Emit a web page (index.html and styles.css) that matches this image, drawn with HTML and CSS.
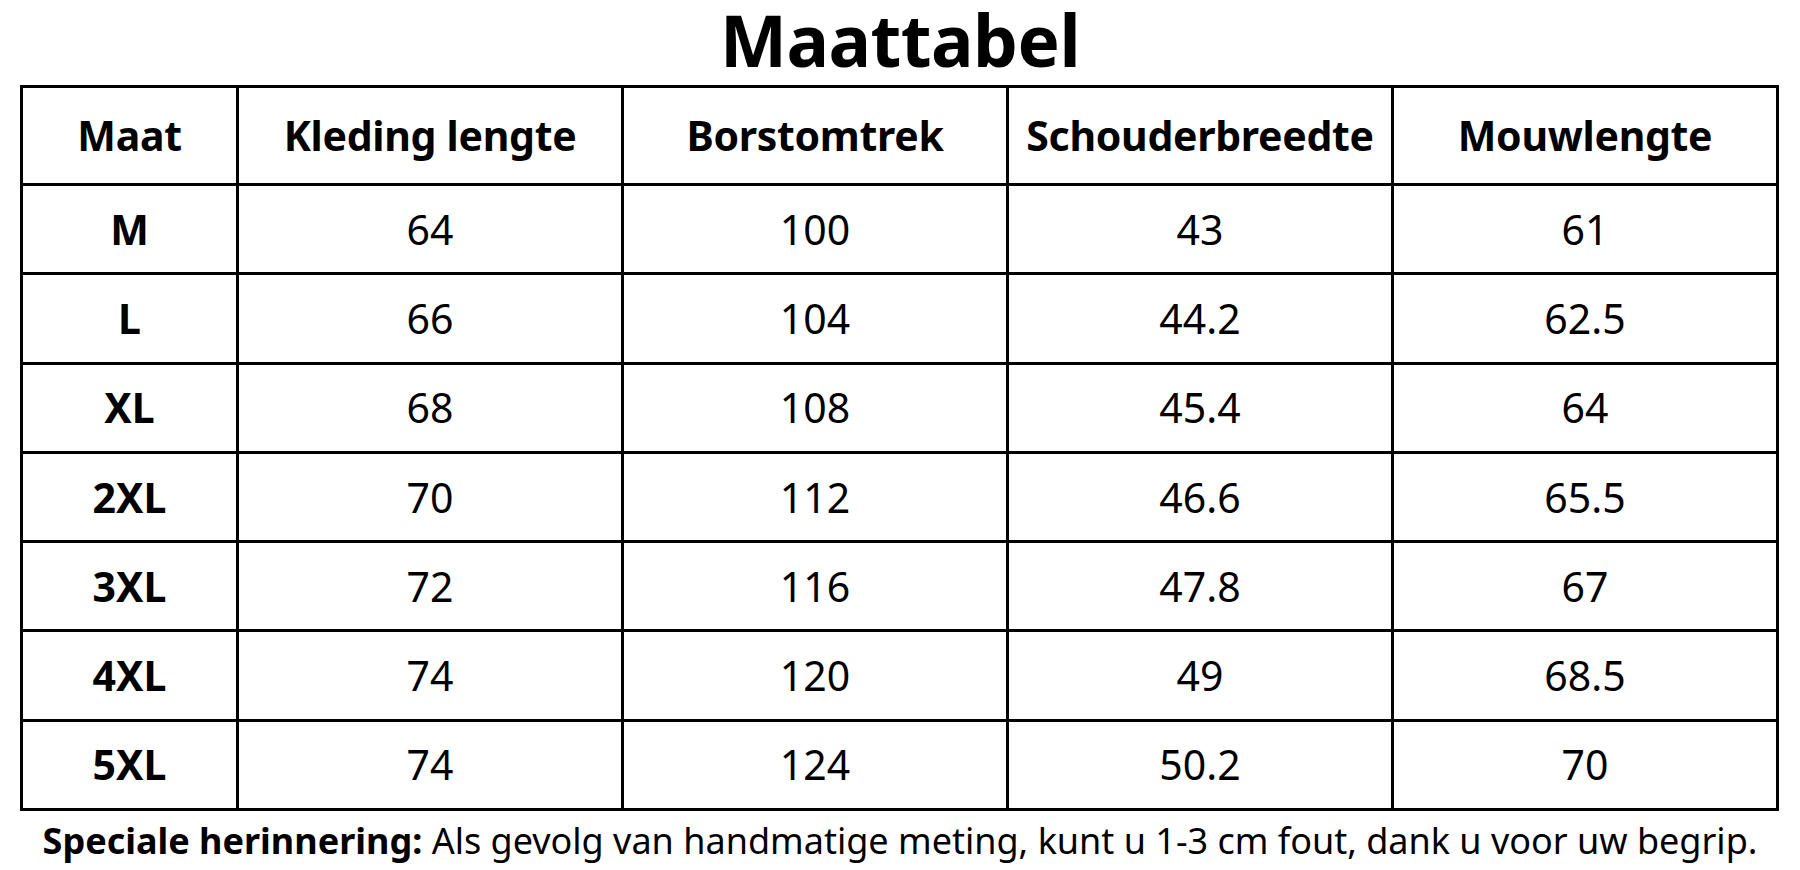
FILE: index.html
```html
<!DOCTYPE html>
<html lang="nl">
<head>
<meta charset="utf-8">
<title>Maattabel</title>
<link rel="stylesheet" href="styles.css">
</head>
<body>
<main class="page">
  <h1 class="title">Maattabel</h1>
  <div class="grid">
    <div class="cell head">Maat</div>
    <div class="cell head">Kleding lengte</div>
    <div class="cell head">Borstomtrek</div>
    <div class="cell head">Schouderbreedte</div>
    <div class="cell head">Mouwlengte</div>

    <div class="cell size">M</div><div class="cell">64</div><div class="cell">100</div><div class="cell">43</div><div class="cell">61</div>
    <div class="cell size">L</div><div class="cell">66</div><div class="cell">104</div><div class="cell">44.2</div><div class="cell">62.5</div>
    <div class="cell size">XL</div><div class="cell">68</div><div class="cell">108</div><div class="cell">45.4</div><div class="cell">64</div>
    <div class="cell size">2XL</div><div class="cell">70</div><div class="cell">112</div><div class="cell">46.6</div><div class="cell">65.5</div>
    <div class="cell size">3XL</div><div class="cell">72</div><div class="cell">116</div><div class="cell">47.8</div><div class="cell">67</div>
    <div class="cell size">4XL</div><div class="cell">74</div><div class="cell">120</div><div class="cell">49</div><div class="cell">68.5</div>
    <div class="cell size">5XL</div><div class="cell">74</div><div class="cell">124</div><div class="cell">50.2</div><div class="cell">70</div>
  </div>
  <p class="note"><strong>Speciale herinnering:</strong> Als gevolg van handmatige meting, kunt u 1-3 cm fout, dank u voor uw begrip.</p>
</main>
</body>
</html>
```

FILE: styles.css
```css
html, body {
  margin: 0;
  padding: 0;
  background: #ffffff;
}

body {
  width: 1800px;
  height: 870px;
  overflow: hidden;
  font-family: "Noto Sans", "Open Sans", sans-serif;
  color: #000;
}

.page {
  display: flex;
  flex-direction: column;
  align-items: center;
}

.title {
  margin: 0 0 5px 0;
  font-size: 71px;
  line-height: 80px;
  font-weight: 700;
  letter-spacing: -0.5px;
}

.grid {
  width: 1759px;
  box-sizing: border-box;
  display: grid;
  grid-template-columns: 213px repeat(4, 1fr);
  grid-template-rows: 95px repeat(7, 86.3px);
  gap: 3px;
  padding: 3px;
  background: #000;
  margin-left: -1px;
}

.cell {
  background: #fff;
  display: flex;
  align-items: center;
  justify-content: center;
  font-size: 41px;
  font-weight: 400;
  line-height: 1;
}

.head {
  font-weight: 700;
  font-size: 41px;
  letter-spacing: -0.3px;
}

.size {
  font-weight: 700;
}

.note {
  margin: 10px 0 0 0;
  font-size: 36px;
  line-height: 40px;
  white-space: nowrap;
}

.note strong {
  font-weight: 700;
}
```
